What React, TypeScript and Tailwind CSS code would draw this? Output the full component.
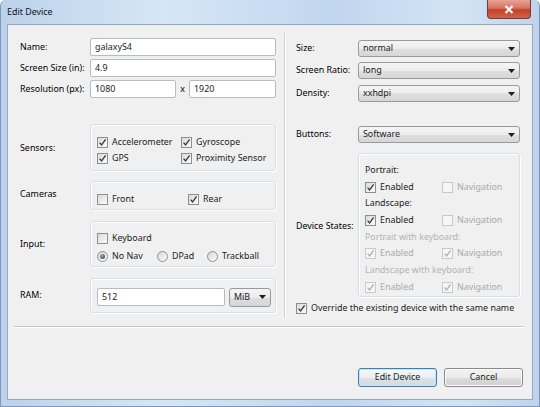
import type { ReactNode } from 'react'

function Check({ checked, disabled, label, className }: { checked?: boolean; disabled?: boolean; label: string; className?: string }) {
  return (
    <div className={`flex items-center gap-[4px] whitespace-nowrap ${disabled ? 'text-[#a9a9a9]' : 'text-[#1b1b1b]'} ${className ?? ''}`}>
      <span className={`w-[11px] h-[11px] shrink-0 border flex items-center justify-center ${disabled ? 'border-[#c9c9c9] bg-[#f6f6f6]' : 'border-[#8e8f8f] bg-gradient-to-br from-[#dadada] to-[#fcfcfc]'}`}>
        {checked && (
          <svg viewBox="0 0 9 9" className="w-[9px] h-[9px]">
            <path d="M1.6 4.6 L3.6 7 L7.6 1.4" fill="none" stroke={disabled ? '#b0b0b0' : '#3a3a3a'} strokeWidth="1.3" />
          </svg>
        )}
      </span>
      <span>{label}</span>
    </div>
  )
}

function Radio({ checked, label, className }: { checked?: boolean; label: string; className?: string }) {
  return (
    <div className={`flex items-center gap-[4px] text-[#1b1b1b] ${className ?? ''}`}>
      <span className="w-[11px] h-[11px] shrink-0 rounded-full border border-[#8e8f8f] bg-gradient-to-br from-[#d6d6d6] to-[#fdfdfd] flex items-center justify-center">
        {checked && <span className="w-[5px] h-[5px] rounded-full bg-[radial-gradient(circle_at_35%_35%,#8fb3a6,#1f3d3a)]" />}
      </span>
      <span>{label}</span>
    </div>
  )
}

function TextBox({ value, className }: { value: string; className?: string }) {
  return (
    <div className={`h-[18px] bg-white border border-[#b8bbc1] rounded-[2px] flex items-center pl-[4px] text-[#1b1b1b] ${className ?? ''}`}>
      {value}
    </div>
  )
}

function Combo({ value, className }: { value: string; className?: string }) {
  return (
    <div className={`h-[17px] border border-[#9a9a9a] rounded-[3px] flex items-center justify-between pl-[4px] pr-[4px] text-[#1b1b1b] bg-[linear-gradient(#f5f5f5_0%,#ececec_50%,#dfdfdf_50%,#d6d6d6_100%)] ${className ?? ''}`}>
      <span>{value}</span>
      <svg viewBox="0 0 7 4" className="w-[7px] h-[4px]"><path d="M0 0 H7 L3.5 4 Z" fill="#1e1e1e" /></svg>
    </div>
  )
}

function Group({ className, children }: { className?: string; children: ReactNode }) {
  return (
    <div className={`border border-[#d5dfe5] rounded-[3px] shadow-[inset_1px_1px_0_#ffffff,1px_1px_0_#ffffff] ${className ?? ''}`}>
      {children}
    </div>
  )
}

export default function App() {
  return (
    <div className="w-[540px] h-[407px] flex flex-col bg-[linear-gradient(90deg,#bcd2ea,#d6e6f6_30%,#c0d6ee_62%,#d3e4f5_85%,#bfd4ec)] border-x border-b border-[#7c98ba] rounded-t-[6px] overflow-hidden font-['Noto_Sans','Open_Sans',sans-serif] text-[8.9px] leading-none">
      {/* title bar */}
      <div className="h-[24px] flex items-start justify-between">
        <div className="pl-[6px] pt-[8px] text-[#111]">Edit Device</div>
        <div className="w-[44px] h-[19px] mr-[8px] rounded-b-[4px] border border-t-0 border-[#7a3a30] bg-[linear-gradient(#e7a497_0%,#d7745f_45%,#c2402a_55%,#d4624a_100%)] flex items-center justify-center">
          <svg viewBox="0 0 10 9" className="w-[10px] h-[9px]"><path d="M1.5 1 L8.5 8 M8.5 1 L1.5 8" stroke="#ffffff" strokeWidth="2" /></svg>
        </div>
      </div>

      {/* client area */}
      <div className="mx-[6px] h-[376px] border border-[#92a8c3] bg-[#f0f0f0] flex flex-col">
        <div className="h-[293px] flex">
          {/* left column */}
          <div className="w-[276px] pt-[13px] pl-[12px] pr-[8px] flex flex-col">
            <div className="flex items-center h-[18px]">
              <div className="w-[70px]">Name:</div>
              <TextBox value="galaxyS4" className="w-[186px]" />
            </div>
            <div className="flex items-center h-[18px] mt-[3px]">
              <div className="w-[70px]">Screen Size (in):</div>
              <TextBox value="4.9" className="w-[186px]" />
            </div>
            <div className="flex items-center h-[18px] mt-[3px]">
              <div className="w-[70px]">Resolution (px):</div>
              <TextBox value="1080" className="w-[86px]" />
              <div className="w-[13px] text-center">x</div>
              <TextBox value="1920" className="w-[87px]" />
            </div>

            <div className="flex items-center mt-[26px]">
              <div className="w-[70px] pt-[2px]">Sensors:</div>
              <Group className="w-[186px] h-[47px] pt-[11px] pl-[6px] flex flex-col gap-[3px]">
                <div className="flex h-[13px]">
                  <Check checked label="Accelerometer" className="w-[84px]" />
                  <Check checked label="Gyroscope" />
                </div>
                <div className="flex h-[13px]">
                  <Check checked label="GPS" className="w-[84px]" />
                  <Check checked label="Proximity Sensor" />
                </div>
              </Group>
            </div>

            <div className="flex items-center mt-[10px]">
              <div className="w-[70px] pb-[3px]">Cameras</div>
              <Group className="w-[186px] h-[29px] pt-[11px] pl-[6px] flex">
                <Check label="Front" className="w-[91px] h-[13px]" />
                <Check checked label="Rear" className="h-[13px]" />
              </Group>
            </div>

            <div className="flex items-center mt-[11px]">
              <div className="w-[70px]">Input:</div>
              <Group className="w-[186px] h-[46px] pt-[10px] pl-[6px] flex flex-col gap-[5px]">
                <Check label="Keyboard" className="h-[13px]" />
                <div className="flex h-[13px]">
                  <Radio checked label="No Nav" className="w-[60px]" />
                  <Radio label="DPad" className="w-[50px]" />
                  <Radio label="Trackball" />
                </div>
              </Group>
            </div>

            <div className="flex items-center mt-[11px]">
              <div className="w-[70px]">RAM:</div>
              <Group className="w-[186px] h-[35px] pl-[6px] pt-[3px] flex items-center">
                <TextBox value="512" className="w-[128px] h-[16px]" />
                <Combo value="MiB" className="w-[42px] h-[19px] ml-[4px]" />
              </Group>
            </div>
          </div>

          {/* divider */}
          <div className="mt-[8px] w-[2px] border-l border-[#d0d0d0] border-r border-r-white" />

          {/* right column */}
          <div className="flex-1 pt-[15px] pl-[10px] pr-[12px] flex flex-col">
            <div className="flex items-center">
              <div className="w-[62px]">Size:</div>
              <Combo value="normal" className="w-[162px]" />
            </div>
            <div className="flex items-center mt-[5px]">
              <div className="w-[62px]">Screen Ratio:</div>
              <Combo value="long" className="w-[162px]" />
            </div>
            <div className="flex items-center mt-[6px]">
              <div className="w-[62px]">Density:</div>
              <Combo value="xxhdpi" className="w-[162px]" />
            </div>
            <div className="flex items-center mt-[24px]">
              <div className="w-[62px]">Buttons:</div>
              <Combo value="Software" className="w-[162px]" />
            </div>

            <div className="flex items-center mt-[10px]">
              <div className="w-[62px] pt-[2px]">Device States:</div>
              <Group className="w-[162px] h-[144px] pt-[8px] pl-[6px] flex flex-col">
                <div className="h-[16.7px] flex items-center text-[#1b1b1b]">Portrait:</div>
                <div className="h-[16.7px] flex items-center">
                  <Check checked label="Enabled" className="w-[77px]" />
                  <Check disabled label="Navigation" />
                </div>
                <div className="h-[16.7px] flex items-center text-[#1b1b1b]">Landscape:</div>
                <div className="h-[16.7px] flex items-center">
                  <Check checked label="Enabled" className="w-[77px]" />
                  <Check disabled label="Navigation" />
                </div>
                <div className="h-[16.7px] flex items-center text-[#b3b3b3]">Portrait with keyboard:</div>
                <div className="h-[16.7px] flex items-center">
                  <Check checked disabled label="Enabled" className="w-[77px]" />
                  <Check checked disabled label="Navigation" />
                </div>
                <div className="h-[16.7px] flex items-center text-[#b3b3b3]">Landscape with keyboard:</div>
                <div className="h-[16.7px] flex items-center">
                  <Check checked disabled label="Enabled" className="w-[77px]" />
                  <Check checked disabled label="Navigation" />
                </div>
              </Group>
            </div>

            <Check checked label="Override the existing device with the same name" className="mt-[5px] h-[13px]" />
          </div>
        </div>

        {/* separator */}
        <div className="mt-[8px] ml-[6px] mr-[8px] h-[2px] border-t border-[#c8c8c8] border-b border-b-white" />

        {/* buttons */}
        <div className="mt-[40px] flex justify-end gap-[7px] pr-[9px]">
          <button className="w-[79px] h-[19px] rounded-[3px] border border-[#3c7fb1] shadow-[inset_0_0_0_1px_#c4e4f7] bg-[linear-gradient(#f4f8fa_0%,#e9eff3_50%,#dbe3e8_50%,#d2dbe1_100%)] text-[#1b1b1b]">
            Edit Device
          </button>
          <button className="w-[79px] h-[19px] rounded-[3px] border border-[#8a8a8a] shadow-[inset_0_0_0_1px_#fbfbfb] bg-[linear-gradient(#f2f2f2_0%,#ebebeb_50%,#dddddd_50%,#cfcfcf_100%)] text-[#1b1b1b]">
            Cancel
          </button>
        </div>
      </div>
    </div>
  )
}
